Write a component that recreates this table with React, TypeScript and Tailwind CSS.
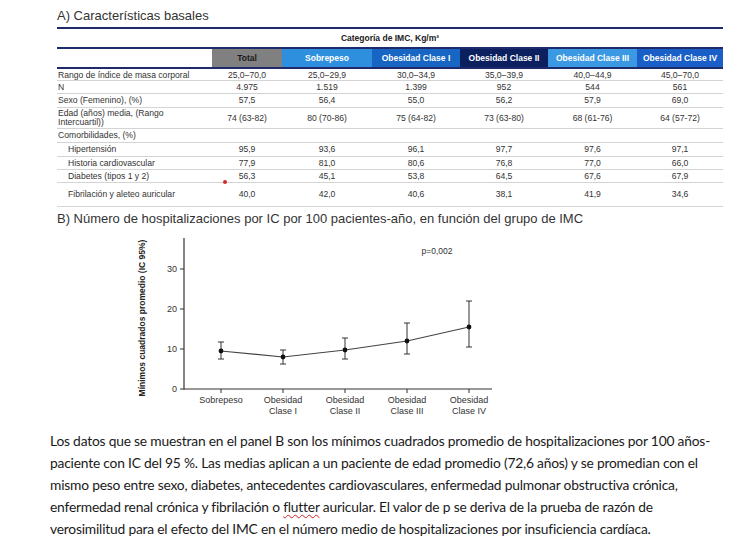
import React from 'react';

const COLS = 'grid grid-cols-[155px_70px_90px_88px_88px_89px_86px]';

const headers = [
  { label: 'Total', cls: 'bg-[#808080] text-[#1a1a1a]' },
  { label: 'Sobrepeso', cls: 'bg-[#2f8fdf] text-white' },
  { label: 'Obesidad Clase I', cls: 'bg-[#1766c4] text-white' },
  { label: 'Obesidad Clase II', cls: 'bg-[#0c1f5e] text-white' },
  { label: 'Obesidad Clase III', cls: 'bg-[#3b99e3] text-white' },
  { label: 'Obesidad Clase IV', cls: 'bg-[#1a5fc8] text-white' },
];

type RowProps = {
  label: React.ReactNode;
  values: string[];
  height: string;
  indent?: boolean;
};

const Row: React.FC<RowProps> = ({ label, values, height, indent }) => (
  <div className={`${COLS} ${height} border-b border-[#d4d4d4] text-[8.6px] text-[#333]`}>
    <div className={`flex items-center leading-[9px] ${indent ? 'pl-[11px]' : 'pl-[1px]'}`}>{label}</div>
    {values.map((v, i) => (
      <div key={i} className="flex items-center justify-center">
        {v}
      </div>
    ))}
  </div>
);

const points = [
  { x: 91, y: 123, hi: 114, lo: 131, l1: 'Sobrepeso', l2: '' },
  { x: 153, y: 129, hi: 122, lo: 136, l1: 'Obesidad', l2: 'Clase I' },
  { x: 215, y: 122, hi: 110, lo: 131, l1: 'Obesidad', l2: 'Clase II' },
  { x: 277, y: 113, hi: 95, lo: 126, l1: 'Obesidad', l2: 'Clase III' },
  { x: 339, y: 99, hi: 73, lo: 119, l1: 'Obesidad', l2: 'Clase IV' },
];

const Chart: React.FC = () => (
  <svg width="380" height="192" viewBox="0 0 380 192" className="block ml-[130px]" fontFamily="Liberation Sans, Arial, sans-serif">
    <text
      x="0"
      y="0"
      transform="translate(15 90) rotate(-90)"
      textAnchor="middle"
      fontSize="8.5"
      fontWeight="bold"
      fill="#222"
    >
      Mínimos cuadrados promedio (IC 95%)
    </text>
    <line x1="54" y1="10" x2="54" y2="161.5" stroke="#333" strokeWidth="1.2" />
    <line x1="54" y1="161" x2="362" y2="161" stroke="#333" strokeWidth="1.2" />
    {[0, 10, 20, 30].map((v) => (
      <g key={v}>
        <line x1="50" y1={161 - v * 4} x2="54" y2={161 - v * 4} stroke="#333" strokeWidth="1" />
        <text x="47" y={164 - v * 4} textAnchor="end" fontSize="9" fill="#333">
          {v}
        </text>
      </g>
    ))}
    <text x="307" y="26" textAnchor="middle" fontSize="8.5" fill="#333">
      p=0,002
    </text>
    <polyline points={points.map((p) => `${p.x},${p.y}`).join(' ')} fill="none" stroke="#444" strokeWidth="1.2" />
    {points.map((p) => (
      <g key={p.x}>
        <line x1={p.x} y1="161" x2={p.x} y2="165" stroke="#333" strokeWidth="1" />
        <line x1={p.x} y1={p.hi} x2={p.x} y2={p.lo} stroke="#333" strokeWidth="1" />
        <line x1={p.x - 3} y1={p.hi} x2={p.x + 3} y2={p.hi} stroke="#333" strokeWidth="1" />
        <line x1={p.x - 3} y1={p.lo} x2={p.x + 3} y2={p.lo} stroke="#333" strokeWidth="1" />
        <circle cx={p.x} cy={p.y} r="2.4" fill="#111" />
        <text x={p.x} y="175" textAnchor="middle" fontSize="9" fill="#333">
          {p.l1}
        </text>
        {p.l2 && (
          <text x={p.x} y="186" textAnchor="middle" fontSize="9" fill="#333">
            {p.l2}
          </text>
        )}
      </g>
    ))}
  </svg>
);

const App: React.FC = () => {
  return (
    <div className="w-[750px] h-[536px] overflow-hidden bg-white font-[family-name:Liberation_Sans,Arial,sans-serif]">
      <h1 className="pt-[7px] pl-[57px] text-[13px] leading-[18px] text-[#333]">A) Características basales</h1>

      {/* Tabla */}
      <div className="relative mt-[2px] ml-[57px] w-[666px]">
        <div className="h-[2px] bg-[#1f2a6b]" />
        <div className="h-[18px] flex items-center justify-center text-[8.5px] font-bold text-[#222]">
          Categoría de IMC, Kg/m²
        </div>
        <div className="h-[2px] bg-[#1f2a6b]" />
        <div className={`${COLS} h-[18px] text-[8.5px] font-bold`}>
          <div />
          {headers.map((h) => (
            <div key={h.label} className={`flex items-center justify-center ${h.cls}`}>
              {h.label}
            </div>
          ))}
        </div>
        <div className="h-[2px] bg-[#1f2a6b]" />
        <Row label="Rango de índice de masa corporal" values={['25,0–70,0', '25,0–29,9', '30,0–34,9', '35,0–39,9', '40,0–44,9', '45,0–70,0']} height="h-[12px]" />
        <Row label="N" values={['4.975', '1.519', '1.399', '952', '544', '561']} height="h-[13px]" />
        <Row label="Sexo  (Femenino), (%)" values={['57,5', '56,4', '55,0', '56,2', '57,9', '69,0']} height="h-[14px]" />
        <Row
          label={
            <span>
              Edad (años) media,  (Rango
              <br />
              Intercuartil))
            </span>
          }
          values={['74 (63-82)', '80 (70-86)', '75 (64-82)', '73 (63-80)', '68 (61-76)', '64 (57-72)']}
          height="h-[21px]"
        />
        <Row label="Comorbilidades, (%)" values={['', '', '', '', '', '']} height="h-[14px]" />
        <Row label="Hipertensión" indent values={['95,9', '93,6', '96,1', '97,7', '97,6', '97,1']} height="h-[14px]" />
        <Row label="Historia cardiovascular" indent values={['77,9', '81,0', '80,6', '76,8', '77,0', '66,0']} height="h-[13px]" />
        <Row label="Diabetes (tipos 1 y 2)" indent values={['56,3', '45,1', '53,8', '64,5', '67,6', '67,9']} height="h-[13px]" />
        <Row label="Fibrilación y aleteo auricular" indent values={['40,0', '42,0', '40,6', '38,1', '41,9', '34,6']} height="h-[24px]" />
        <span className="absolute left-[166px] top-[153px] w-[4px] h-[4px] rounded-full bg-[#d42a2a]" />
      </div>

      <h2 className="mt-[3px] pl-[57px] text-[13px] leading-[18px] text-[#333]">
        B) Número de hospitalizaciones por IC por 100 pacientes-año, en función del grupo de IMC
      </h2>

      <Chart />

      <p className="mt-[10px] pl-[50px] text-[13.8px] leading-[22px] tracking-[-0.2px] text-[#1a1a1a] whitespace-nowrap font-[family-name:Lato,Noto_Sans,sans-serif]">
        Los datos que se muestran en el panel B son los mínimos cuadrados promedio de hospitalizaciones por 100 años-
        <br />
        paciente con IC del 95 %. Las medias aplican a un paciente de edad promedio (72,6 años) y se promedian con el
        <br />
        mismo peso entre sexo, diabetes, antecedentes cardiovasculares, enfermedad pulmonar obstructiva crónica,
        <br />
        enfermedad renal crónica y fibrilación o{' '}
        <span className="underline decoration-wavy decoration-[#d02020] decoration-1 underline-offset-2">flutter</span> auricular. El valor de p se deriva de la prueba de razón de
        <br />
        verosimilitud para el efecto del IMC en el número medio de hospitalizaciones por insuficiencia cardíaca.
      </p>
    </div>
  );
};

export default App;
